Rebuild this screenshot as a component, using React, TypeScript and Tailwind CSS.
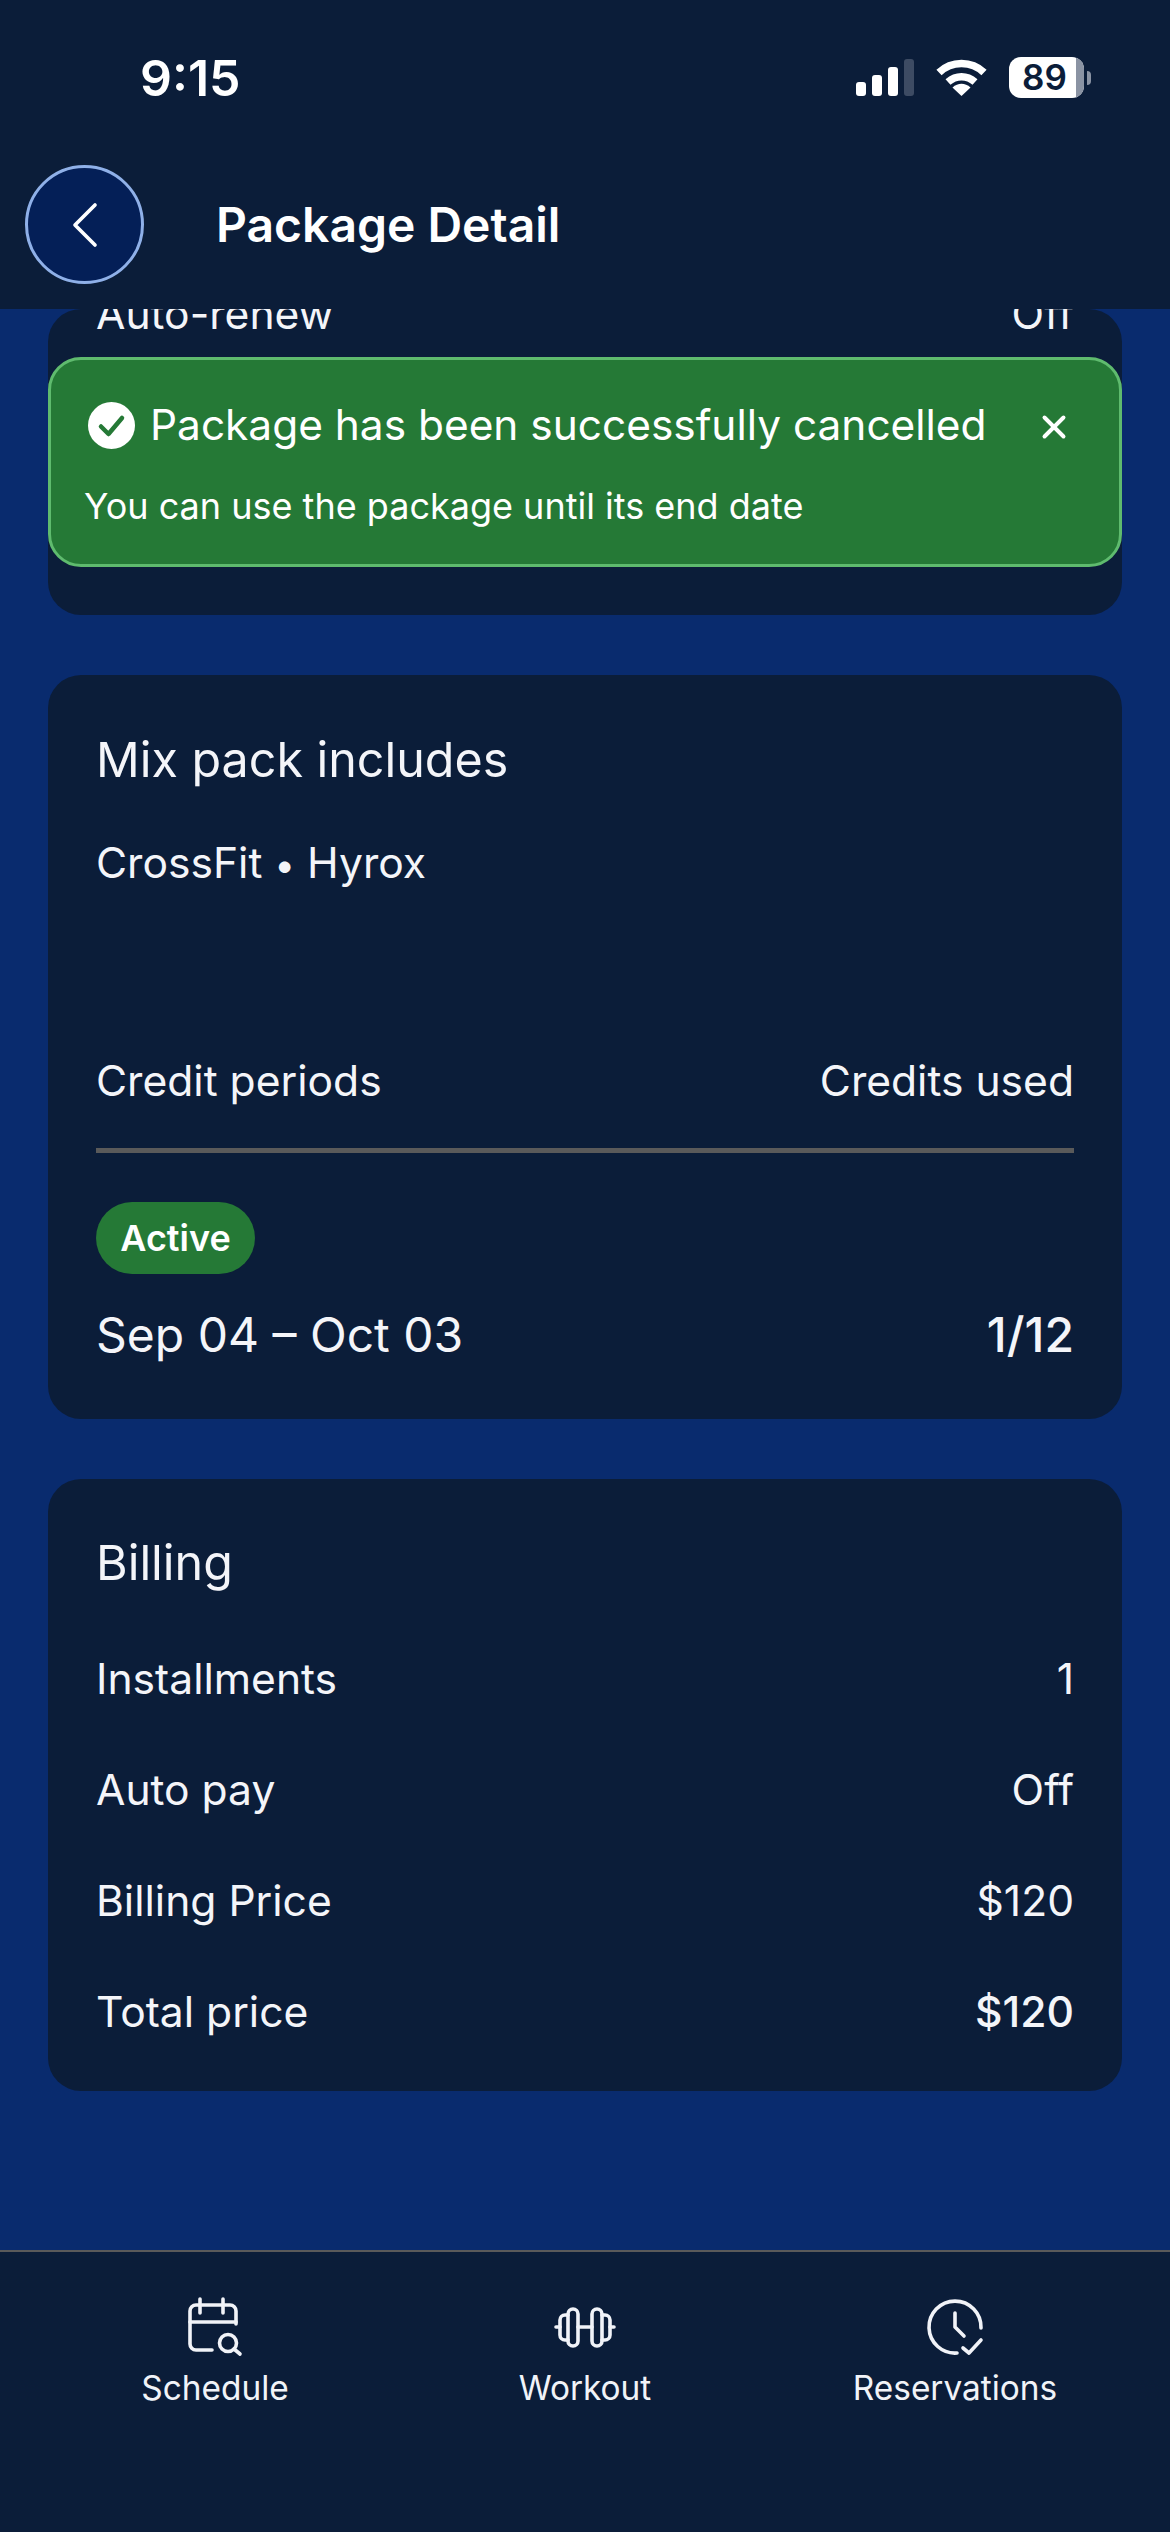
import { ChevronLeft, X } from 'lucide-react'

const billingRows = [
  { label: 'Installments', value: '1' },
  { label: 'Auto pay', value: 'Off' },
  { label: 'Billing Price', value: '$120' },
  { label: 'Total price', value: '$120', strong: true },
]

function StatusIcons() {
  return (
    <div className="flex items-center">
      <div className="flex items-end gap-[6px] h-[37px]">
        <div className="w-[10px] h-[14px] rounded-[3px] bg-white" />
        <div className="w-[10px] h-[21px] rounded-[3px] bg-white" />
        <div className="w-[10px] h-[29px] rounded-[3px] bg-white" />
        <div className="w-[10px] h-[37px] rounded-[3px] bg-[#3d4b63]" />
      </div>
      <svg width="51" height="37" viewBox="0 0 51 37" className="ml-[22px]" fill="none" stroke="#fff" strokeWidth="7.5">
        <path d="M3 13.5C15.5 1.5 35.5 1.5 48 13.5" />
        <path d="M12 23C20 16 31 16 39 23" />
        <path d="M16.5 28.5C22 23.5 29 23.5 34.5 28.5L25.5 37Z" fill="#fff" stroke="none" />
      </svg>
      <div className="ml-[22px] flex items-center">
        <div className="relative flex h-[41px] w-[75px] items-center justify-center overflow-hidden rounded-[12px] bg-white">
          <span className="pr-[4px] text-[35px] font-semibold text-[#0b1d39]">89</span>
          <div className="absolute inset-y-0 right-0 w-[8px] bg-[#8a93a3]" />
        </div>
        <div className="ml-[3px] h-[14px] w-[4px] rounded-r-full bg-[#8a93a3]" />
      </div>
    </div>
  )
}

function Card({ children, className }: { children: React.ReactNode; className?: string }) {
  return <section className={`flex flex-col rounded-[33px] bg-[#0b1d39] px-[48px] ${className}`}>{children}</section>
}

function CalendarSearchIcon() {
  return (
    <svg width="60" height="60" viewBox="0 0 60 60" fill="none" stroke="#f1f3f8" strokeWidth="3.6" strokeLinecap="round" strokeLinejoin="round">
      <path d="M27 53H11a6 6 0 0 1-6-6V14a6 6 0 0 1 6-6h34a6 6 0 0 1 6 6v13" />
      <path d="M5 25h46" />
      <path d="M15 2v14M38 2v14" />
      <circle cx="43" cy="46" r="8.5" />
      <path d="M49 52l6 5" />
    </svg>
  )
}

function DumbbellIcon() {
  return (
    <svg width="66" height="48" viewBox="0 0 66 48" fill="none" stroke="#f1f3f8" strokeWidth="3.6" strokeLinecap="round" strokeLinejoin="round">
      <rect x="16" y="6" width="10" height="37" rx="5" />
      <rect x="40" y="6" width="10" height="37" rx="5" />
      <path d="M16 12h-3a5 5 0 0 0-5 5v15a5 5 0 0 0 5 5h3" />
      <path d="M50 12h3a5 5 0 0 1 5 5v15a5 5 0 0 1-5 5h-3" />
      <path d="M26 24h14M4 24h4M58 24h4" />
    </svg>
  )
}

function ClockCheckIcon() {
  return (
    <svg width="60" height="60" viewBox="0 0 60 60" fill="none" stroke="#f1f3f8" strokeWidth="3.6" strokeLinecap="round" strokeLinejoin="round">
      <path d="M56 31A26 26 0 1 0 32 56" />
      <path d="M30 16v14l9 9" />
      <path d="M38 51l6 5 12-13" />
    </svg>
  )
}

function NavItem({ icon, label }: { icon: React.ReactNode; label: string }) {
  return (
    <div className="flex flex-col items-center">
      <div className="flex h-[60px] items-center justify-center">{icon}</div>
      <span className="mt-[11px] text-[33.4px] leading-[40px] text-[#f1f3f8]">{label}</span>
    </div>
  )
}

export default function App() {
  return (
    <div className="relative flex h-[2532px] w-[1170px] flex-col overflow-hidden bg-[#092b6e] font-['Inter',sans-serif] text-[#f4f5f9]">
      <header className="relative z-10 h-[309px] bg-[#0b1d39]">
        <div className="flex h-[150px] items-start justify-between pl-[140px] pr-[79px] pt-[48px]">
          <span className="text-[50px] font-semibold leading-[60px] text-white">9:15</span>
          <div className="pt-[9px]">
            <StatusIcons />
          </div>
        </div>
        <div className="flex items-center pl-[25px] pt-[15px]">
          <button className="flex h-[119px] w-[119px] items-center justify-center rounded-full border-[3px] border-[#8fb0e8] bg-[#041f57]">
            <ChevronLeft size={80} strokeWidth={1.1} className="text-white" />
          </button>
          <h1 className="ml-[72px] text-[48px] font-semibold leading-[58px] text-white">Package Detail</h1>
        </div>
      </header>

      <main className="flex-1 overflow-hidden px-[48px]">
        <Card className="h-[306px]">
          <div className="-mt-[20px] flex justify-between text-[42.6px] leading-[50px]">
            <span>Auto-renew</span>
            <span>Off</span>
          </div>
        </Card>

        <Card className="mt-[60px] h-[744px] pt-[55px]">
          <h2 className="text-[48.4px] font-[430] leading-[60px]">Mix pack includes</h2>
          <p className="mt-[48px] text-[42.6px] leading-[50px]">
            CrossFit <span className="text-[37px]">•</span> Hyrox
          </p>
          <div className="mt-[166px] flex justify-between text-[42.6px] leading-[50px]">
            <span>Credit periods</span>
            <span>Credits used</span>
          </div>
          <div className="mt-[42px] h-[5px] bg-[#5a5a5a]" />
          <span className="mt-[49px] flex h-[72px] w-[159px] items-center justify-center rounded-full bg-[#257936] text-[36px] font-semibold text-white">
            Active
          </span>
          <div className="mt-[31px] flex items-center justify-between text-[48px] leading-[60px]">
            <span>Sep 04 – Oct 03</span>
            <span className="font-medium">1/12</span>
          </div>
        </Card>

        <Card className="mt-[60px] h-[612px] pt-[54px]">
          <h2 className="text-[48.4px] font-[430] leading-[60px]">Billing</h2>
          <div className="mt-[61px] flex flex-col gap-[61px]">
            {billingRows.map((row) => (
              <div key={row.label} className="flex justify-between text-[42.6px] leading-[50px]">
                <span>{row.label}</span>
                <span className={row.strong ? 'font-medium' : ''}>{row.value}</span>
              </div>
            ))}
          </div>
        </Card>
      </main>

      <nav className="grid h-[282px] grid-cols-3 border-t-2 border-[#5a5a5a] bg-[#0b1d39] px-[30px] pt-[45px]">
        <NavItem icon={<CalendarSearchIcon />} label="Schedule" />
        <NavItem icon={<DumbbellIcon />} label="Workout" />
        <NavItem icon={<ClockCheckIcon />} label="Reservations" />
      </nav>

      {/* toast sits over the scrolled content */}
      <div className="absolute left-[48px] top-[357px] z-20 h-[210px] w-[1074px] rounded-[33px] border-[3px] border-[#5fbb6e] bg-[#257936] text-white">
        <div className="flex items-center pl-[37px] pt-[40px]">
          <svg width="47" height="47" viewBox="0 0 47 47">
            <circle cx="23.5" cy="23.5" r="23.5" fill="#fff" />
            <path d="M13 24.5l7.5 7.5L34 16" fill="none" stroke="#257936" strokeWidth="4.5" strokeLinecap="round" strokeLinejoin="round" />
          </svg>
          <span className="ml-[15px] text-[42.4px] leading-[50px]">Package has been successfully cancelled</span>
          <X size={38} strokeWidth={2.5} className="ml-auto mr-[46px] mt-[4px]" />
        </div>
        <p className="mt-[34px] pl-[33px] text-[36px] leading-[44px]">You can use the package until its end date</p>
      </div>
    </div>
  )
}
